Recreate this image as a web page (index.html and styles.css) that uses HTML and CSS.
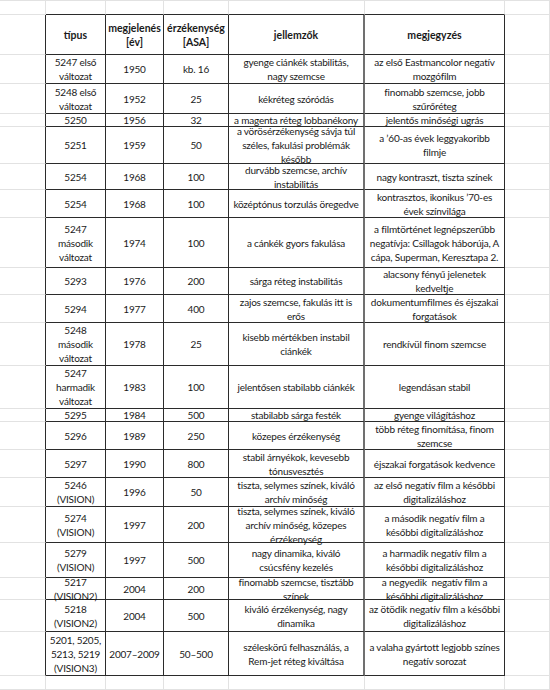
FILE: index.html
```html
<!DOCTYPE html>
<html lang="hu">
  <head>
    <meta charset="UTF-8">
    <title>Eastman színes negatív filmek</title>
    <link rel="stylesheet" href="styles.css">
  </head>
  <body>
    <div class="sheet">
      <div class="g"></div><div class="g cap"></div><div class="g cap"></div><div class="g cap"></div><div class="g cap"></div><div class="g cap"></div><div class="g"></div>

      <div class="g edge"></div>
      <div class="c h">típus</div>
      <div class="c h">megjelenés<br>[év]</div>
      <div class="c h">érzékenység<br>[ASA]</div>
      <div class="c h mid">jellemzők</div>
      <div class="c h">megjegyzés</div>
      <div class="g"></div>

      <div class="g edge"></div>
      <div class="c">5247 első<br>változat</div>
      <div class="c">1950</div>
      <div class="c">kb. 16</div>
      <div class="c mid">gyenge ciánkék stabilitás,<br>nagy szemcse</div>
      <div class="c">az első Eastmancolor negatív<br>mozgófilm</div>
      <div class="g"></div>

      <div class="g edge"></div>
      <div class="c">5248 első<br>változat</div>
      <div class="c">1952</div>
      <div class="c">25</div>
      <div class="c mid">kékréteg szóródás</div>
      <div class="c">finomabb szemcse, jobb<br>szűrőréteg</div>
      <div class="g"></div>

      <div class="g edge"></div>
      <div class="c">5250</div>
      <div class="c">1956</div>
      <div class="c">32</div>
      <div class="c mid">a magenta réteg lobbanékony</div>
      <div class="c">jelentős minőségi ugrás</div>
      <div class="g"></div>

      <div class="g edge"></div>
      <div class="c">5251</div>
      <div class="c">1959</div>
      <div class="c">50</div>
      <div class="c mid">a vörösérzékenység sávja túl<br>széles, fakulási problémák<br>később</div>
      <div class="c">a ’60-as évek leggyakoribb<br>filmje</div>
      <div class="g"></div>

      <div class="g edge"></div>
      <div class="c">5254</div>
      <div class="c">1968</div>
      <div class="c">100</div>
      <div class="c mid">durvább szemcse, archív<br>instabilitás</div>
      <div class="c">nagy kontraszt, tiszta színek</div>
      <div class="g"></div>

      <div class="g edge"></div>
      <div class="c">5254</div>
      <div class="c">1968</div>
      <div class="c">100</div>
      <div class="c mid">középtónus torzulás öregedve</div>
      <div class="c">kontrasztos, ikonikus ’70-es<br>évek színvilága</div>
      <div class="g"></div>

      <div class="g edge"></div>
      <div class="c">5247<br>második<br>változat</div>
      <div class="c">1974</div>
      <div class="c">100</div>
      <div class="c mid">a cánkék gyors fakulása</div>
      <div class="c">a filmtörténet legnépszerűbb<br>negatívja: Csillagok háborúja, A<br>cápa, Superman, Keresztapa 2.</div>
      <div class="g"></div>

      <div class="g edge"></div>
      <div class="c">5293</div>
      <div class="c">1976</div>
      <div class="c">200</div>
      <div class="c mid">sárga réteg instabilitás</div>
      <div class="c">alacsony fényű jelenetek<br>kedveltje</div>
      <div class="g"></div>

      <div class="g edge"></div>
      <div class="c">5294</div>
      <div class="c">1977</div>
      <div class="c">400</div>
      <div class="c mid">zajos szemcse, fakulás itt is<br>erős</div>
      <div class="c">dokumentumfilmes és éjszakai<br>forgatások</div>
      <div class="g"></div>

      <div class="g edge"></div>
      <div class="c">5248<br>második<br>változat</div>
      <div class="c">1978</div>
      <div class="c">25</div>
      <div class="c mid">kisebb mértékben instabil<br>ciánkék</div>
      <div class="c">rendkívül finom szemcse</div>
      <div class="g"></div>

      <div class="g edge"></div>
      <div class="c">5247<br>harmadik<br>változat</div>
      <div class="c">1983</div>
      <div class="c">100</div>
      <div class="c mid">jelentősen stabilabb ciánkék</div>
      <div class="c">legendásan stabil</div>
      <div class="g"></div>

      <div class="g edge"></div>
      <div class="c">5295</div>
      <div class="c">1984</div>
      <div class="c">500</div>
      <div class="c mid">stabilabb sárga festék</div>
      <div class="c">gyenge világításhoz</div>
      <div class="g"></div>

      <div class="g edge"></div>
      <div class="c">5296</div>
      <div class="c">1989</div>
      <div class="c">250</div>
      <div class="c mid">közepes érzékenység</div>
      <div class="c">több réteg finomítása, finom<br>szemcse</div>
      <div class="g"></div>

      <div class="g edge"></div>
      <div class="c">5297</div>
      <div class="c">1990</div>
      <div class="c">800</div>
      <div class="c mid">stabil árnyékok, kevesebb<br>tónusvesztés</div>
      <div class="c">éjszakai forgatások kedvence</div>
      <div class="g"></div>

      <div class="g edge"></div>
      <div class="c">5246<br>(VISION)</div>
      <div class="c">1996</div>
      <div class="c">50</div>
      <div class="c mid">tiszta, selymes színek, kiváló<br>archív minőség</div>
      <div class="c">az első negatív film a későbbi<br>digitalizáláshoz</div>
      <div class="g"></div>

      <div class="g edge"></div>
      <div class="c">5274<br>(VISION)</div>
      <div class="c">1997</div>
      <div class="c">200</div>
      <div class="c mid">tiszta, selymes színek, kiváló<br>archív minőség, közepes<br>érzékenység</div>
      <div class="c">a második negatív film a<br>későbbi digitalizáláshoz</div>
      <div class="g"></div>

      <div class="g edge"></div>
      <div class="c">5279<br>(VISION)</div>
      <div class="c">1997</div>
      <div class="c">500</div>
      <div class="c mid">nagy dinamika, kiváló<br>csúcsfény kezelés</div>
      <div class="c">a harmadik negatív film a<br>későbbi digitalizáláshoz</div>
      <div class="g"></div>

      <div class="g edge"></div>
      <div class="c">5217<br>(VISION2)</div>
      <div class="c">2004</div>
      <div class="c">200</div>
      <div class="c mid">finomabb szemcse, tisztább<br>színek</div>
      <div class="c">a negyedik&nbsp; negatív film a<br>későbbi digitalizáláshoz</div>
      <div class="g"></div>

      <div class="g edge"></div>
      <div class="c">5218<br>(VISION2)</div>
      <div class="c">2004</div>
      <div class="c">500</div>
      <div class="c mid">kiváló érzékenység, nagy<br>dinamika</div>
      <div class="c">az ötödik negatív film a későbbi<br>digitalizáláshoz</div>
      <div class="g"></div>

      <div class="g edge"></div>
      <div class="c">5201, 5205,<br>5213, 5219<br>(VISION3)</div>
      <div class="c">2007–2009</div>
      <div class="c">50–500</div>
      <div class="c mid">széleskörű felhasználás, a<br>Rem-jet réteg kiváltása</div>
      <div class="c">a valaha gyártott legjobb színes<br>negatív sorozat</div>
      <div class="g"></div>

      <div class="g"></div><div class="g"></div><div class="g"></div><div class="g"></div><div class="g"></div><div class="g"></div><div class="g"></div>
    </div>
  </body>
</html>
```

FILE: styles.css
```css
body {
  margin: 0;
  background-color: #fff;
  font-family: Lato, "Liberation Sans", sans-serif;
  font-size: 10px;
  letter-spacing: -0.2px;
  color: #1a1a1a;
}

.sheet {
  display: grid;
  width: 550px;
  grid-template-columns: 46px 60px 58px 65px 136px 140px 45px;
  grid-template-rows:
    14px 40px 29px 30px 13px 37px 26px 28px 50px 27px 28px
    43px 43px 13px 28px 28px 29px 36px 35px 22px 32px 44px 14px;
  border-top: 1px solid #e2e2e2;
}

.sheet > div {
  box-sizing: border-box;
  border-right: 1px solid #e2e2e2;
  border-bottom: 1px solid #e2e2e2;
}

/* gridline cells that touch the table */
.g.edge {
  border-right-color: #2b2b2b;
}

.g.cap {
  border-bottom-color: #2b2b2b;
}

.sheet > .c {
  display: flex;
  align-items: center;
  justify-content: center;
  text-align: center;
  line-height: 14px;
  white-space: nowrap;
  border-right-color: #2b2b2b;
  border-bottom-color: #2b2b2b;
}

.sheet > .c.mid {
  border-right: 2px solid #707070;
}

.h {
  font-size: 10.5px;
  font-weight: bold;
  letter-spacing: 0;
}
```
